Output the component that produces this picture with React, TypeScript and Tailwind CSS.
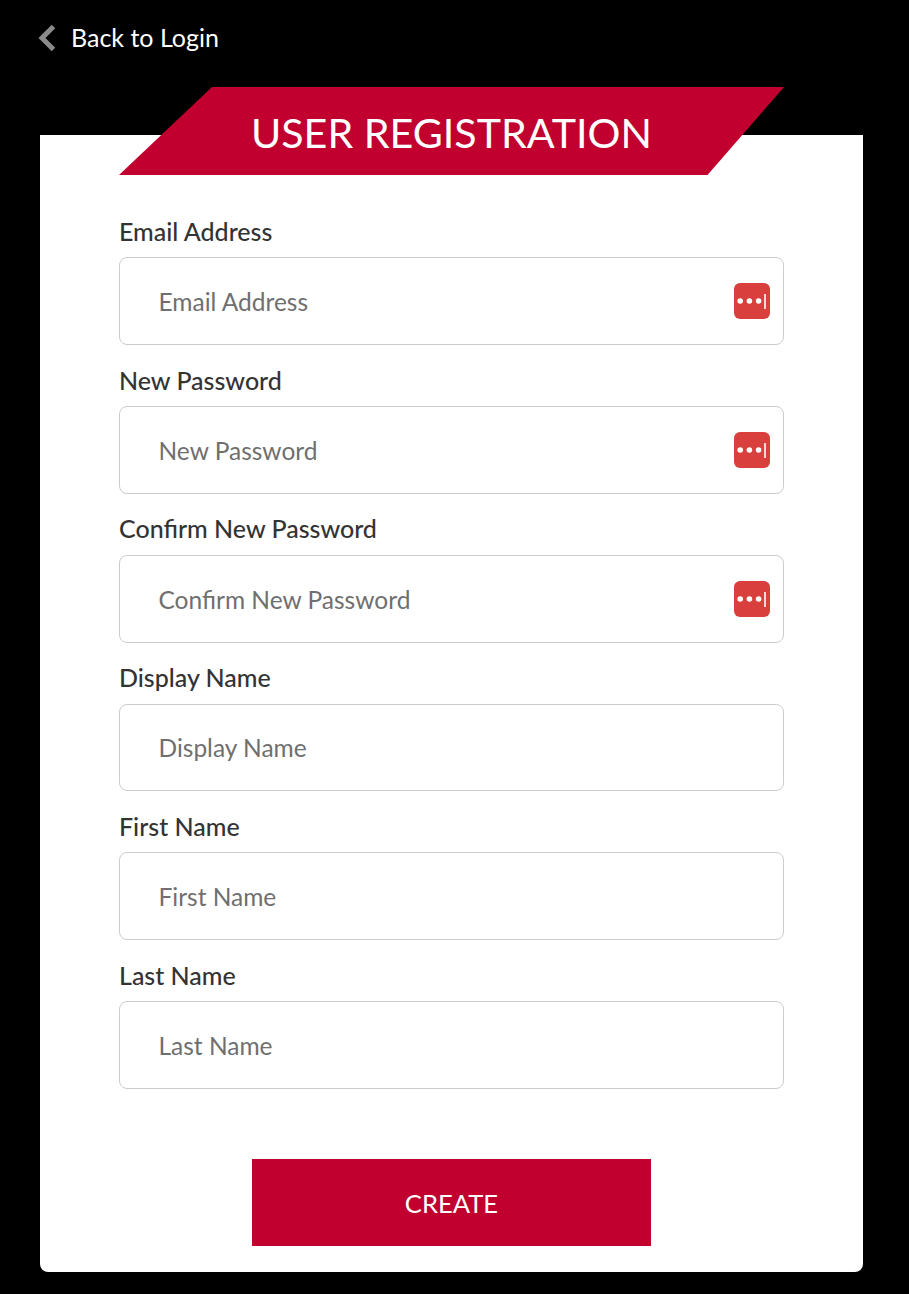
const fields = [
  { label: "Email Address", hasKey: true },
  { label: "New Password", hasKey: true },
  { label: "Confirm New Password", hasKey: true },
  { label: "Display Name", hasKey: false },
  { label: "First Name", hasKey: false },
  { label: "Last Name", hasKey: false },
];

const PasswordIcon = () => (
  <svg viewBox="0 0 36 36" className="absolute right-[14px] top-[26px] w-9 h-9">
    <rect width="36" height="36" rx="6" fill="#d93f3c" />
    <circle cx="6.2" cy="18" r="2.8" fill="#fff" />
    <circle cx="15.4" cy="18" r="2.8" fill="#fff" />
    <circle cx="24.6" cy="18" r="2.8" fill="#fff" />
    <rect x="30.2" y="11" width="1.6" height="15" fill="#fff" />
  </svg>
);

const Field = ({ label, hasKey }: { label: string; hasKey: boolean }) => (
  <div className="flex flex-col">
    <label className="h-[43.4px] text-[25px] leading-[34px] font-medium text-[#333]">{label}</label>
    <div className="relative">
      <input
        placeholder={label}
        className="block w-full h-[87.8px] rounded-lg border border-[#ccc] bg-white pl-[38.5px] pr-4 pt-px text-[24.5px] text-[#333] placeholder:text-[#6f6f6f] outline-none"
      />
      {hasKey && <PasswordIcon />}
    </div>
  </div>
);

export default function App() {
  return (
    <div className="min-h-[1294px] bg-black pl-10 pr-[46px] pb-[22px] font-['Lato',sans-serif]">
      <a className="flex h-[87px] items-center pb-[11px] text-white text-[25px] -ml-[2px]">
        <svg viewBox="0 0 18 28" className="w-[18px] h-7 mr-[15px]">
          <polyline points="15.5,2.5 4,14 15.5,25.5" fill="none" stroke="#8a8a8a" strokeWidth="5" />
        </svg>
        Back to Login
      </a>

      <div className="mt-12 flex flex-col rounded-b-lg bg-white px-[79px] pb-[26px]">
        <div className="-mt-12 mb-[38.8px] flex h-[88px] items-center justify-center bg-[#c1002f] pt-[3px] text-[41.2px] text-white [clip-path:polygon(93px_0,100%_0,588.5px_100%,0_100%)]">
          USER REGISTRATION
        </div>
        <div className="flex flex-col gap-[17.6px]">
          {fields.map((f) => (
            <Field key={f.label} label={f.label} hasKey={f.hasKey} />
          ))}
        </div>
        <div className="mt-[70px] flex justify-center">
          <button className="h-[87px] w-[399px] bg-[#c1002f] pt-px text-[25.6px] text-white">CREATE</button>
        </div>
      </div>
    </div>
  );
}
